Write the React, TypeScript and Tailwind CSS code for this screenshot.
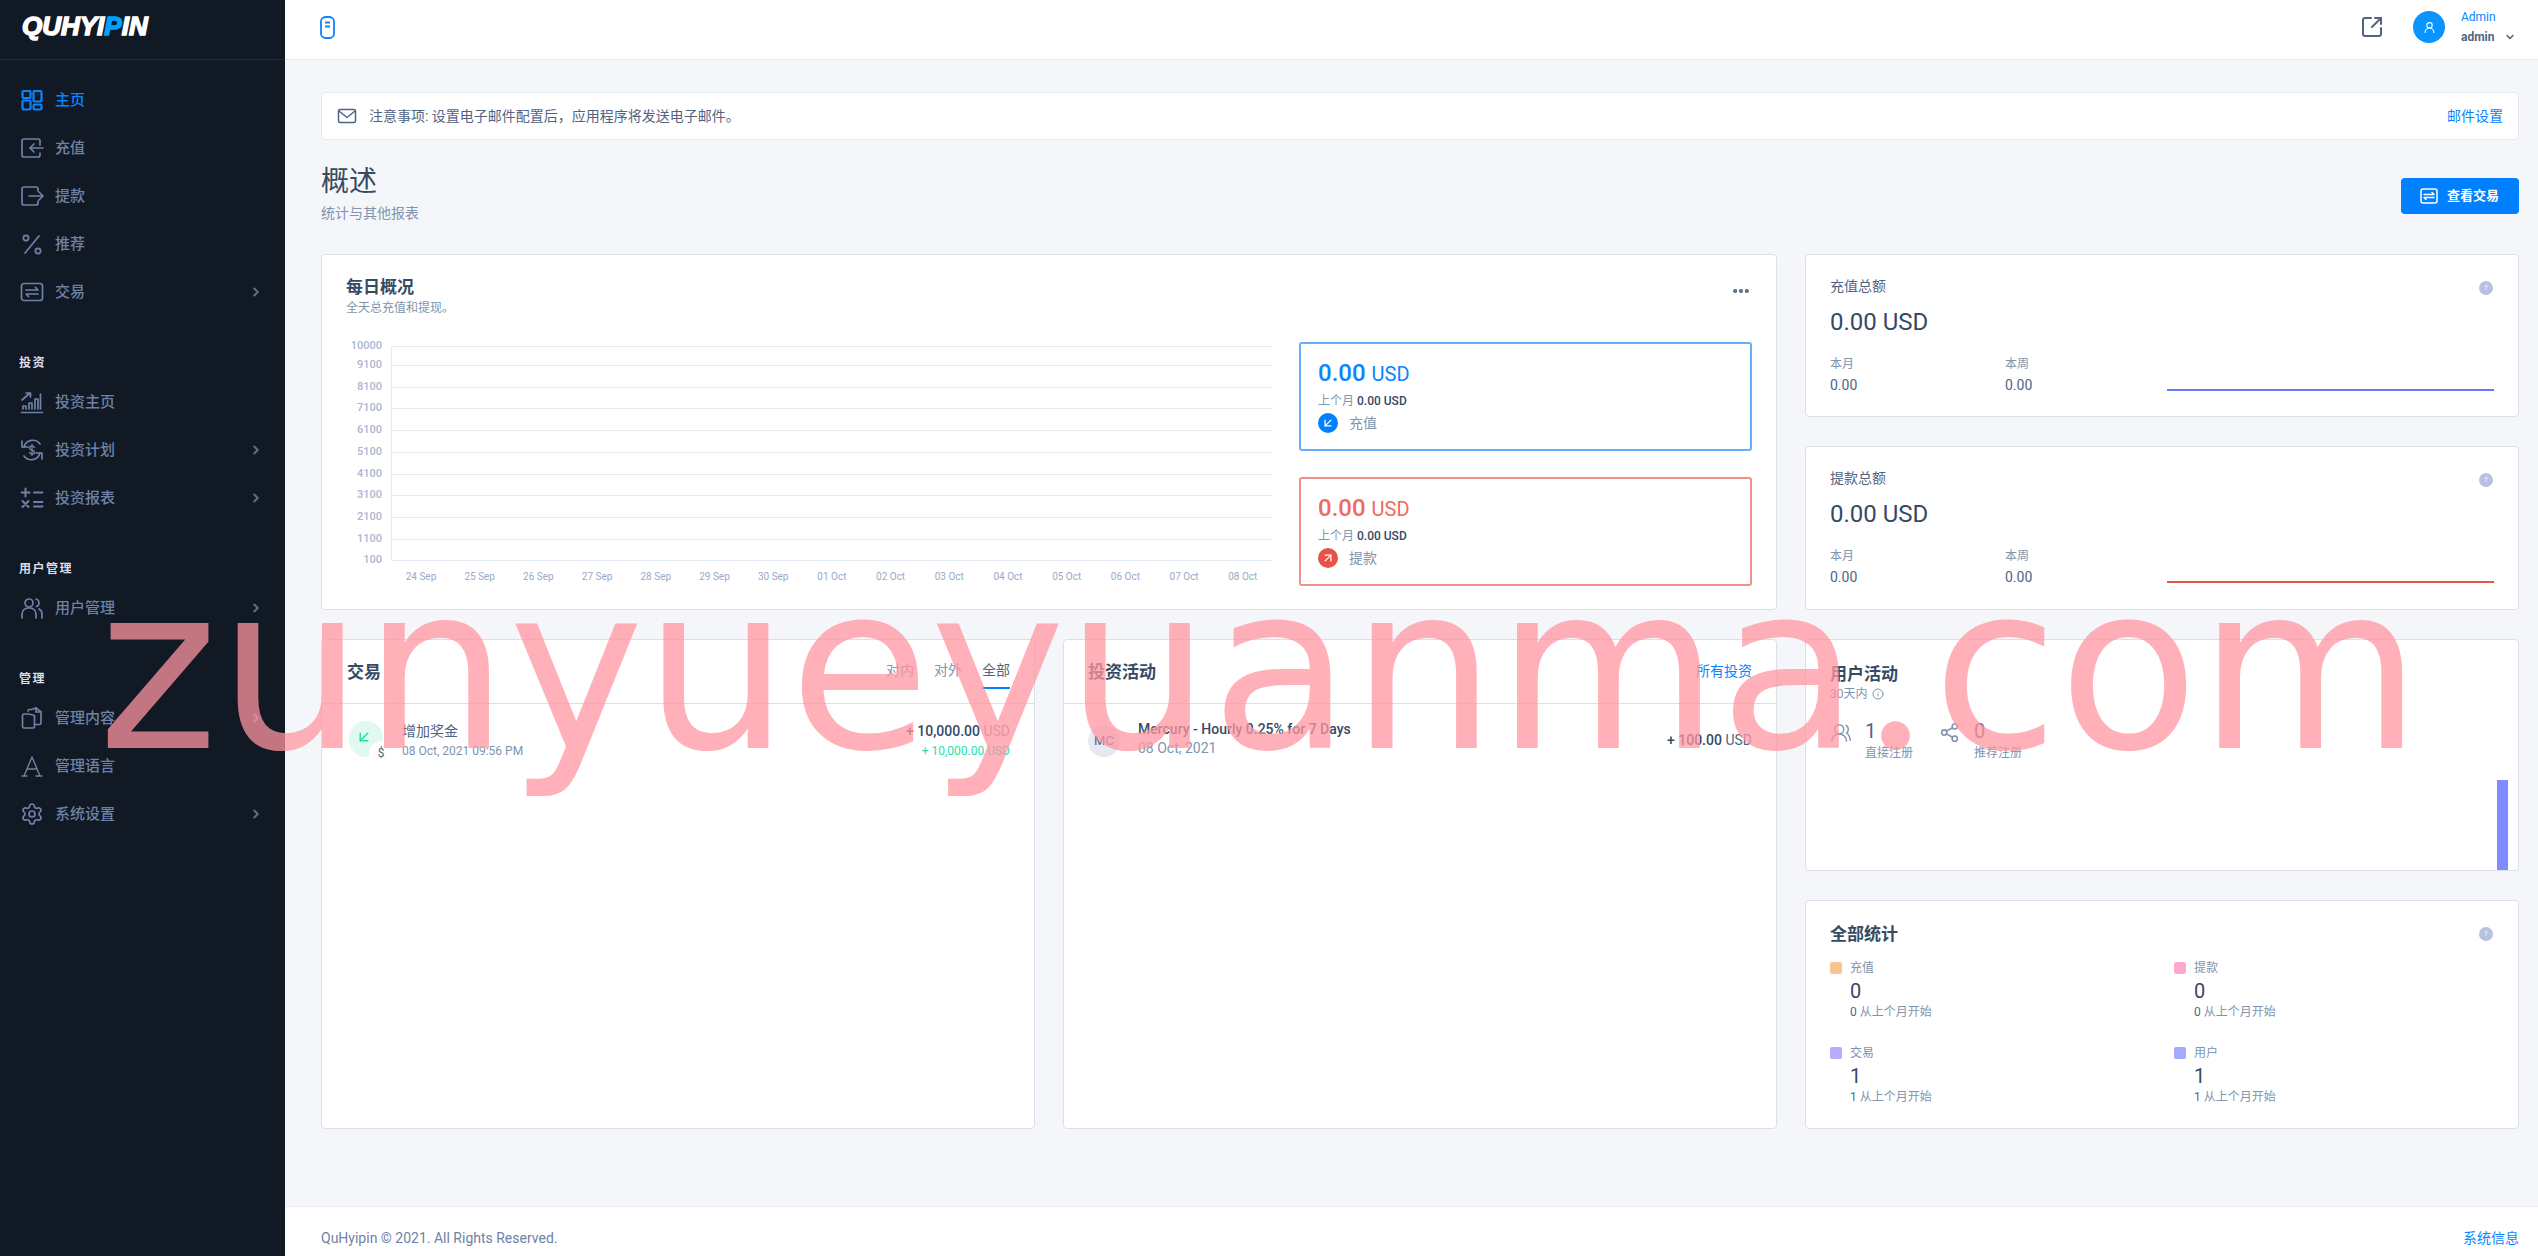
import React from 'react';
import {
  ArrowDownLeft,
  ArrowUpRight,
  ChevronDown,
  ChevronRight,
  Ellipsis,
  Info,
  Settings,
  Share2,
  SquareArrowOutUpRight,
  UserRound,
  UsersRound,
} from 'lucide-react';

const Nav = ({ children }: { children: React.ReactNode }) => (
  <svg viewBox="0 0 24 24" className="h-[24px] w-[24px]" fill="none" stroke="currentColor" strokeWidth="1.7" strokeLinecap="round" strokeLinejoin="round">
    {children}
  </svg>
);

const icons: Record<string, React.ReactNode> = {
  dashboard: (
    <Nav>
      <g strokeWidth="2.2">
        <rect x="2.5" y="3" width="8" height="7" rx="1.2" />
        <rect x="13.5" y="3" width="8" height="10.500" rx="1.2" />
        <rect x="2.5" y="12.500" width="8" height="9" rx="1.2" />
        <rect x="13.5" y="16.500" width="8" height="5" rx="1.2" />
      </g>
    </Nav>
  ),
  deposit: (
    <Nav>
      <path d="M20 7V5a2 2 0 0 0-2-2H4a2 2 0 0 0-2 2v14a2 2 0 0 0 2 2h14a2 2 0 0 0 2-2v-2" />
      <path d="M23 12H10M14 8l-4 4 4 4M20 9v-1" />
    </Nav>
  ),
  withdraw: (
    <Nav>
      <path d="M18 7V5a2 2 0 0 0-2-2H4a2 2 0 0 0-2 2v14a2 2 0 0 0 2 2h12a2 2 0 0 0 2-2v-2" />
      <path d="M9 12h14M19 8l4 4-4 4" />
    </Nav>
  ),
  percent: (
    <Nav>
      <path d="M19 4 5 21" />
      <circle cx="6" cy="6" r="2.6" />
      <circle cx="18" cy="19" r="2.6" />
    </Nav>
  ),
  tranx: (
    <Nav>
      <rect x="1.5" y="3.5" width="21" height="17" rx="2.5" />
      <path d="M6 10h12l-2.5-2.5M18 14H6l2.5 2.5" />
    </Nav>
  ),
  invest: (
    <Nav>
      <path d="M1.5 22.5h21M3 19v-3h3v3M9 19v-6h3v6M15 19V9h3v10M20.5 19V4" />
      <path d="M2 10l8-7M6 3h4.5v4" />
    </Nav>
  ),
  plan: (
    <Nav>
      <path d="M4 9a9 9 0 0 1 16-3M20 15a9 9 0 0 1-16 3" />
      <path d="M2 3v6h6M22 21v-6h-6" />
      <path d="M14.5 9.5c-.5-1-1.500-1.500-2.500-1.500-1.500 0-2.500.8-2.500 2s1 1.700 2.500 2 2.500.8 2.500 2-1 2-2.500 2c-1 0-2-.5-2.500-1.500M12 6.500v11" strokeWidth="1.3" />
    </Nav>
  ),
  calc: (
    <Nav>
      <path d="M1.500 6.500h8M5.500 2.500v8M14 6.500h8.500" strokeWidth="2" />
      <path d="M2.500 15l6 6M8.500 15l-6 6M14 16h8.500M14 20.500h8.500" strokeWidth="2" />
    </Nav>
  ),
  users: (
    <Nav>
      <circle cx="9" cy="7" r="4" />
      <path d="M2 22v-4a6 6 0 0 1 6-6h2a6 6 0 0 1 6 6v4M16 3c2 .5 3 2 3 4s-1 3-2.500 3.500M19 13c2 1 3 3 3 5v4" />
    </Nav>
  ),
  content: (
    <Nav>
      <path d="M8 8H4a1.500 1.500 0 0 0-1.500 1.500v11A1.500 1.500 0 0 0 4 22h9a1.500 1.500 0 0 0 1.500-1.500V9.500L9 8" />
      <path d="M8 5a1.500 1.500 0 0 1 1.500-1.500h2L16 2v4h5v11a1.500 1.500 0 0 1-1.500 1.500h-5" />
      <path d="M16 2l5 4" />
    </Nav>
  ),
  lang: (
    <Nav>
      <path d="M2 22h5M16 22h6M4 22 12 3l8 19M7 15h10" strokeWidth="1.400" />
    </Nav>
  ),
};

const sidebar = [
  {
    items: [
      { label: '主页', icon: 'dashboard', active: true },
      { label: '充值', icon: 'deposit' },
      { label: '提款', icon: 'withdraw' },
      { label: '推荐', icon: 'percent' },
      { label: '交易', icon: 'tranx', more: true },
    ],
  },
  {
    head: '投资',
    items: [
      { label: '投资主页', icon: 'invest' },
      { label: '投资计划', icon: 'plan', more: true },
      { label: '投资报表', icon: 'calc', more: true },
    ],
  },
  { head: '用户管理', items: [{ label: '用户管理', icon: 'users', more: true }] },
  {
    head: '管理',
    items: [
      { label: '管理内容', icon: 'content', more: true },
      { label: '管理语言', icon: 'lang' },
      { label: '系统设置', icon: 'settings', more: true },
    ],
  },
];

const yLabels = ['10000', '9100', '8100', '7100', '6100', '5100', '4100', '3100', '2100', '1100', '100'];
const yLines = [0, 19, 41, 62, 84, 106, 128, 149, 171, 193, 214];
const xLabels = ['24 Sep', '25 Sep', '26 Sep', '27 Sep', '28 Sep', '29 Sep', '30 Sep', '01 Oct', '02 Oct', '03 Oct', '04 Oct', '05 Oct', '06 Oct', '07 Oct', '08 Oct'];

const Card = ({ className = '', children }: { className?: string; children: React.ReactNode }) => (
  <div className={`rounded-[4px] border border-[#dbdfea] bg-white ${className}`}>{children}</div>
);

const Help = () => (
  <span className="flex h-[14px] w-[14px] items-center justify-center rounded-full bg-[#b7c2e0] text-[7px] leading-none text-white">?</span>
);

const Title = ({ children }: { children: React.ReactNode }) => (
  <h3 className="text-[17px] leading-[20px] font-bold text-[#364a63]">{children}</h3>
);

const DailyChart = () => (
  <svg width="926" height="240" className="shrink-0 overflow-visible" fontFamily="Roboto, sans-serif">
    <line x1="45.500" y1="0" x2="45.500" y2="214" stroke="#e5e9f2" />
    {yLines.map((y, i) => (
      <g key={i}>
        <line x1="45" x2="926" y1={y + 0.5} y2={y + 0.5} stroke="#e5e9f2" />
        <text x="36" y={y + 3} textAnchor="end" fontSize="11" fontWeight="500" fill="#a9b6d2">
          {yLabels[i]}
        </text>
      </g>
    ))}
    {xLabels.map((label, i) => (
      <text key={label} x={75 + i * 58.7} y="234" textAnchor="middle" fontSize="10" fill="#9aa9c7">
        {label}
      </text>
    ))}
  </svg>
);

const SummaryBox = ({ kind }: { kind: 'in' | 'out' }) => {
  const isIn = kind === 'in';
  return (
    <div className={`h-[109px] rounded-[3px] border-2 bg-white pt-[12px] pl-[17px] ${isIn ? 'border-[#66adff]' : 'border-[#f09189]'}`}>
      <div className={`flex items-baseline gap-[6px] leading-[34px] ${isIn ? 'text-[#0a84ff]' : 'text-[#ee6b60]'}`}>
        <span className="text-[24px] font-medium">0.00</span>
        <span className="text-[20px]">USD</span>
      </div>
      <div className="mt-[1px] text-[12px] leading-[18px] text-[#8094ae]">
        上个月 <span className="font-medium text-[#364a63]">0.00 USD</span>
      </div>
      <div className="mt-[3px] flex items-center gap-[11px] text-[14px] leading-[20px] text-[#8094ae]">
        <span className={`flex h-[20px] w-[20px] items-center justify-center rounded-full text-white ${isIn ? 'bg-[#007fff]' : 'bg-[#e85347]'}`}>
          {isIn ? <ArrowDownLeft size={14} strokeWidth={2.2} /> : <ArrowUpRight size={14} strokeWidth={2.2} />}
        </span>
        {isIn ? '充值' : '提款'}
      </div>
    </div>
  );
};

const TotalCard = ({ title, line, height }: { title: string; line: string; height: string }) => (
  <Card className={`relative pt-[21px] pr-[24px] pl-[24px] ${height}`}>
    <div className="flex items-center justify-between pr-[1px] text-[14px] leading-[20px] text-[#526484]">
      {title}
      <span className="mt-[4px]">
        <Help />
      </span>
    </div>
    <div className="mt-[11px] text-[24px] leading-[30px] text-[#364a63]">0.00 USD</div>
    <div className="mt-[18px] flex items-end">
      <div className="w-[175px]">
        <div className="text-[12px] leading-[18px] text-[#8094ae]">本月</div>
        <div className="mt-[2px] text-[14px] leading-[20px] text-[#526484]">0.00</div>
      </div>
      <div className="w-[162px]">
        <div className="text-[12px] leading-[18px] text-[#8094ae]">本周</div>
        <div className="mt-[2px] text-[14px] leading-[20px] text-[#526484]">0.00</div>
      </div>
      <div className={`mb-[4px] h-[2px] w-[327px] ${line}`} />
    </div>
  </Card>
);

const StatCell = ({ label, value, swatch }: { label: string; value: string; swatch: string }) => (
  <div className="h-[85px]">
    <div className="flex items-center gap-[8px] text-[12px] leading-[16px] text-[#8094ae]">
      <span className={`h-[12px] w-[12px] rounded-[2px] ${swatch}`} />
      {label}
    </div>
    <div className="mt-[2px] pl-[20px] text-[20px] leading-[26px] text-[#364a63]">{value}</div>
    <div className="-mt-[1px] pl-[20px] text-[12px] leading-[18px] text-[#8094ae]">
      <span className="text-[#526484]">{value}</span> 从上个月开始
    </div>
  </div>
);

export default function App() {
  return (
    <div
      className="relative flex h-[1256px] overflow-hidden bg-[#f5f6fa] text-[#526484]"
      style={{ fontFamily: 'Roboto, "Noto Sans CJK SC", sans-serif' }}
    >
      {/* Sidebar */}
      <aside className="w-[285px] shrink-0 bg-[#101924]">
        <div className="flex h-[60px] items-center border-b border-[#1e2b3c] pb-[8px] pl-[22px]">
          <span className="text-[26px] leading-none font-bold text-white italic [-webkit-text-stroke:1.5px_white] [font-family:'Liberation_Sans',sans-serif]">
            QUHYI<span className="text-[#00a2ff] [-webkit-text-stroke:1.5px_#00a2ff]">P</span>IN
          </span>
        </div>
        <nav className="pt-[16px]">
          {sidebar.map((group, i) => (
            <div key={i} className={group.head ? 'pt-[39px]' : ''}>
              {group.head && (
                <div className="mb-[7px] pl-[19px] text-[12px] leading-[16px] font-bold tracking-[1.5px] text-[#dbdfea]">{group.head}</div>
              )}
              {group.items.map((item) => (
                <div
                  key={item.label}
                  className={`flex h-[48px] items-center pr-[22px] pl-[20px] ${item.active ? 'text-[#0a84ff]' : 'text-[#6e82a5]'}`}
                >
                  <span className="flex w-[35px] shrink-0">
                    {item.icon === 'settings' ? <Settings size={24} strokeWidth={1.7} /> : icons[item.icon]}
                  </span>
                  <span className="flex-1 text-[15px] leading-[20px] font-medium">{item.label}</span>
                  {item.more && <ChevronRight size={14} strokeWidth={3.5} className="text-[#5f6e84]" />}
                </div>
              ))}
            </div>
          ))}
        </nav>
      </aside>

      <div className="flex min-w-0 flex-1 flex-col">
        {/* Top bar */}
        <header className="flex h-[60px] shrink-0 items-center border-b border-[#e5e9f2] bg-white pr-[22px] pb-[5px] pl-[35px]">
          <svg width="15" height="23" viewBox="0 0 15 23" fill="none" stroke="#0a84ff" strokeWidth="1.8">
            <rect x="1" y="1" width="13" height="21" rx="4.500" />
            <path d="M5 6.500h5M5 10.500h5" strokeWidth="2" />
          </svg>
          <SquareArrowOutUpRight size={24} strokeWidth={2} className="ml-auto text-[#526484]" />
          <span className="ml-[29px] flex h-[32px] w-[32px] items-center justify-center rounded-full bg-[#0a94ff] text-white">
            <UserRound size={13} strokeWidth={2} />
          </span>
          <div className="ml-[16px] w-[55px]">
            <div className="text-[12px] leading-[18px] text-[#0a84ff]">Admin</div>
            <div className="mt-[2px] flex items-center justify-between text-[12px] leading-[18px] font-bold text-[#526484]">
              admin
              <ChevronDown size={12} strokeWidth={3} />
            </div>
          </div>
        </header>

        <main className="min-h-0 flex-1 pt-[32px] pr-[19px] pl-[36px]">
          <div className="flex h-[48px] items-center rounded-[4px] border border-[#e5e9f2] bg-white pr-[15px] pl-[15px] text-[14px] text-[#526484]">
            <svg width="20" height="20" viewBox="0 0 20 20" fill="none" stroke="#526484" strokeWidth="1.500" strokeLinejoin="round">
              <rect x="1.500" y="3.500" width="17" height="13" rx="1.500" />
              <path d="M2 5l8 6.500L18 5" />
            </svg>
            <span className="ml-[12px]">注意事项: 设置电子邮件配置后，应用程序将发送电子邮件。</span>
            <span className="ml-auto text-[#0a84ff]">邮件设置</span>
          </div>

          <div className="mt-[24px] flex items-start justify-between">
            <div>
              <h2 className="text-[28px] leading-[36px] font-normal text-[#364a63]">概述</h2>
              <p className="mt-[3px] text-[14px] leading-[20px] text-[#8094ae]">统计与其他报表</p>
            </div>
            <button className="mt-[14px] flex h-[36px] w-[118px] items-center rounded-[4px] bg-[#007fff] pl-[19px] text-[13px] font-bold text-white">
              <svg width="18" height="16" viewBox="0 0 18 16" fill="none" stroke="white" strokeWidth="1.500" strokeLinecap="round" strokeLinejoin="round">
                <rect x="1" y="1" width="16" height="14" rx="2" />
                <path d="M4 6.500h10l-2-2M14 9.500H4l2 2" />
              </svg>
              <span className="ml-[9px]">查看交易</span>
            </button>
          </div>

          <div className="mt-[31px] grid grid-cols-[714px_714px_714px] gap-x-[28px] gap-y-[29px]">
            {/* Daily overview */}
            <Card className="col-span-2 h-[356px] pt-[22px] pr-[24px] pl-[24px]">
              <div className="flex items-start justify-between">
                <div>
                  <Title>每日概况</Title>
                  <div className="mt-[2px] text-[12px] leading-[18px] text-[#8094ae]">全天总充值和提现。</div>
                </div>
                <Ellipsis size={20} strokeWidth={3} className="mt-[4px] mr-[1px] text-[#526484]" />
              </div>
              <div className="mt-[29px] flex items-start gap-[27px]">
                <DailyChart />
                <div className="-mt-[4px] flex flex-1 flex-col gap-[26px]">
                  <SummaryBox kind="in" />
                  <SummaryBox kind="out" />
                </div>
              </div>
            </Card>

            <div className="flex flex-col gap-[29px]">
              <TotalCard title="充值总额" line="bg-[#6576ff]" height="h-[163px]" />
              <TotalCard title="提款总额" line="bg-[#e85347]" height="h-[164px]" />
            </div>

            {/* Transactions */}
            <Card className="h-[490px]">
              <div className="flex h-[64px] items-center justify-between border-b border-[#dbdfea] pr-[24px] pl-[25px]">
                <Title>交易</Title>
                <div className="flex h-full gap-[20px] pt-[20px] text-[14px] leading-[20px] text-[#8094ae]">
                  <span>对内</span>
                  <span>对外</span>
                  <span className="relative text-[#526484]">
                    全部
                    <span className="absolute top-[27px] right-0 left-0 h-[2px] bg-[#007fff]" />
                  </span>
                </div>
              </div>
              <div className="flex pt-[17px] pr-[24px] pl-[27px]">
                <div className="relative h-[36px] w-[34px] rounded-full bg-[#e0f9f1] text-[#1ee0ac]">
                  <ArrowDownLeft size={18} strokeWidth={2} className="absolute top-[7px] left-[6px]" />
                  <span className="absolute -right-[10px] -bottom-[8px] flex h-[24px] w-[24px] items-center justify-center rounded-full bg-white text-[12px] text-[#526484]">$</span>
                </div>
                <div className="ml-[19px] flex-1">
                  <div className="text-[14px] leading-[20px] text-[#526484]">增加奖金</div>
                  <div className="text-[12px] leading-[20px] text-[#8094ae]">08 Oct, 2021 09:56 PM</div>
                </div>
                <div className="text-right">
                  <div className="text-[14px] leading-[20px] font-medium text-[#364a63]">
                    + 10,000.00 <span className="font-normal text-[#8094ae]">USD</span>
                  </div>
                  <div className="text-[12px] leading-[20px] text-[#1ee0ac]">+ 10,000.00 USD</div>
                </div>
              </div>
            </Card>

            {/* Investments */}
            <Card className="h-[490px]">
              <div className="flex h-[64px] items-center justify-between border-b border-[#dbdfea] pr-[24px] pl-[24px]">
                <Title>投资活动</Title>
                <span className="text-[14px] text-[#0a84ff]">所有投资</span>
              </div>
              <div className="flex items-center pt-[19px] pr-[24px] pl-[24px]">
                <span className="flex h-[32px] w-[32px] items-center justify-center rounded-full bg-[#e5e9f2] text-[13px] text-[#526484]">MC</span>
                <div className="-mt-[3px] ml-[18px] flex-1">
                  <div className="text-[14px] leading-[19px] font-medium text-[#364a63]">Mercury - Hourly 0.25% for 7 Days</div>
                  <div className="text-[14px] leading-[19px] text-[#8094ae]">08 Oct, 2021</div>
                </div>
                <div className="text-[14px] text-[#526484]">
                  <span className="font-medium text-[#364a63]">+ 100.00</span> USD
                </div>
              </div>
            </Card>

            <div className="flex flex-col gap-[29px]">
              {/* User activity */}
              <Card className="relative h-[232px] px-[24px] pt-[24px]">
                <Title>用户活动</Title>
                <div className="mt-[1px] flex items-center gap-[4px] text-[12px] leading-[18px] text-[#8094ae]">
                  30天内
                  <Info size={12} />
                </div>
                <div className="mt-[15px] flex">
                  <div className="flex w-[109px]">
                    <UsersRound size={22} strokeWidth={1.600} className="mt-[4px] text-[#8094ae]" />
                    <div className="ml-[13px]">
                      <div className="text-[20px] leading-[26px] text-[#526484]">1</div>
                      <div className="text-[12px] leading-[18px] text-[#8094ae]">直接注册</div>
                    </div>
                  </div>
                  <div className="flex">
                    <Share2 size={21} strokeWidth={1.800} className="mt-[4px] text-[#8094ae]" />
                    <div className="ml-[14px]">
                      <div className="text-[20px] leading-[26px] text-[#526484]">0</div>
                      <div className="text-[12px] leading-[18px] text-[#8094ae]">推荐注册</div>
                    </div>
                  </div>
                </div>
                <div className="absolute right-[10px] bottom-0 h-[90px] w-[11px] bg-[#7f8bff]" />
              </Card>

              {/* All stats */}
              <Card className="h-[229px] px-[24px] pt-[23px]">
                <div className="flex items-center justify-between pr-[1px]">
                  <Title>全部统计</Title>
                  <Help />
                </div>
                <div className="mt-[16px] grid grid-cols-[344px_1fr]">
                  <StatCell label="充值" value="0" swatch="bg-[#f9c291]" />
                  <StatCell label="提款" value="0" swatch="bg-[#ffa9ce]" />
                  <StatCell label="交易" value="1" swatch="bg-[#b8acff]" />
                  <StatCell label="用户" value="1" swatch="bg-[#a3aaff]" />
                </div>
              </Card>
            </div>
          </div>
        </main>

        <footer className="flex h-[50px] shrink-0 items-center justify-between border-t border-[#e5e9f2] bg-white pt-[14px] pr-[19px] pl-[36px] text-[14px]">
          <span className="text-[#6e82a5]">QuHyipin © 2021. All Rights Reserved.</span>
          <span className="text-[#0a84ff]">系统信息</span>
        </footer>
      </div>

      {/* Watermark */}
      <div className="pointer-events-none absolute top-[529px] left-[98px] text-[229px] leading-[280px] whitespace-nowrap text-[rgba(255,150,160,0.75)] [font-family:'DejaVu_Sans',sans-serif]">
        zunyueyuanma<span className="pr-[10px] pl-[9px] leading-none [font-family:Lato,sans-serif]">.</span>com
      </div>
    </div>
  );
}
